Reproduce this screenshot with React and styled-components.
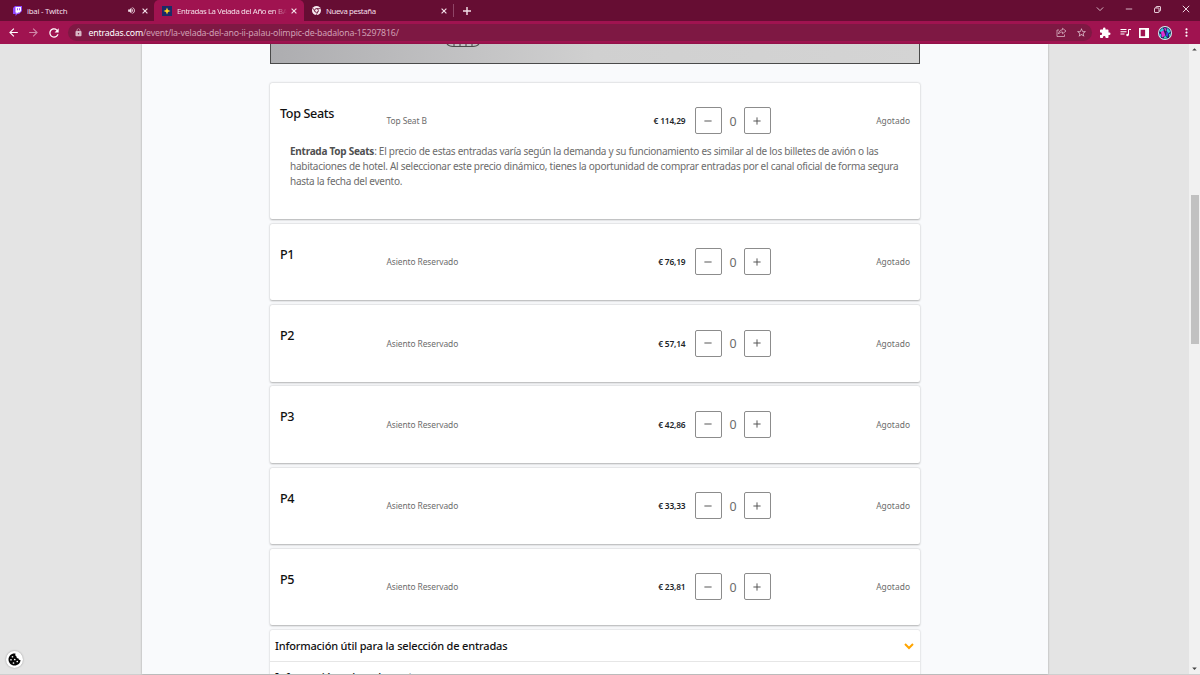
import styled, { createGlobalStyle } from "styled-components";
import {
  MdArrowBack,
  MdArrowForward,
  MdRefresh,
  MdLock,
  MdExtension,
  MdMoreVert,
  MdStarBorder,
  MdVolumeUp,
  MdArrowDropUp,
  MdArrowDropDown,
} from "react-icons/md";

const Colors = {
  frame: "#660d33",
  toolbar: "#a01350",
  omnibox: "#7e1843",
  chromeText: "#f3dfe8",
  page: "#e4e4e4",
  main: "#f9fafc",
  white: "#fff",
  text: "#212529",
  muted: "#6c6c6c",
  orange: "#ffa500",
};

const sections = [
  {
    name: "Top Seats",
    type: "Top Seat B",
    price: "€ 114,29",
    info: true,
  },
  { name: "P1", type: "Asiento Reservado", price: "€ 76,19" },
  { name: "P2", type: "Asiento Reservado", price: "€ 57,14" },
  { name: "P3", type: "Asiento Reservado", price: "€ 42,86" },
  { name: "P4", type: "Asiento Reservado", price: "€ 33,33" },
  { name: "P5", type: "Asiento Reservado", price: "€ 23,81" },
];

const GlobalStyle = createGlobalStyle`
  * {
    box-sizing: border-box;
  }

  body {
    margin: 0;
    overflow: hidden;
    font-family: "Segoe UI", "Noto Sans", "Open Sans", sans-serif;
  }

  svg {
    display: block;
    flex: none;
  }
`;

const Window = styled.div`
  display: flex;
  flex-direction: column;
  width: 1200px;
  height: 675px;
  overflow: hidden;
`;

const TabStrip = styled.div`
  display: flex;
  height: 21px;
  flex: none;
  background: ${Colors.frame};
  color: ${Colors.chromeText};
`;

const Tab = styled.div`
  display: flex;
  align-items: center;
  width: ${(props) => props.$width}px;
  padding: 0 ${(props) => props.$right}px 0 ${(props) => props.$left}px;
  background: ${(props) => (props.$active ? Colors.toolbar : "transparent")};
  border-radius: 5px 5px 0 0;
`;

const TabTitle = styled.span`
  flex: 1;
  margin-left: 5px;
  overflow: hidden;
  white-space: nowrap;
  font-size: 7.8px;
  line-height: 12px;
  letter-spacing: ${(props) => props.$spacing || -0.25}px;
  mask-image: ${(props) =>
    props.$fade ? "linear-gradient(90deg, #000 88%, transparent)" : "none"};
`;

const TabClose = styled.span`
  display: flex;
  margin-left: ${(props) => props.$gap || 7}px;
`;

const Divider = styled.span`
  width: 1px;
  height: 13px;
  margin: 4px 9px 0 0;
  background: #8f4567;
`;

const NewTab = styled.span`
  display: flex;
  align-items: center;
`;

const WindowControls = styled.div`
  display: flex;
  align-items: center;
  gap: 21px;
  margin-left: auto;
  padding: 0 10px 3px 0;
`;

const Toolbar = styled.div`
  display: flex;
  align-items: center;
  flex: none;
  height: 23px;
  padding: 0 7px;
  background: ${Colors.toolbar};
  color: ${Colors.white};
`;

const NavButtons = styled.div`
  display: flex;
  align-items: center;
  gap: 7px;
  width: 61px;
`;

const Faded = styled.span`
  opacity: ${(props) => props.$opacity || 0.5};
`;

const Omnibox = styled.div`
  display: flex;
  align-items: center;
  width: 1024px;
  height: 17px;
  padding: 0 5px 0 6px;
  border-radius: 9px;
  background: ${Colors.omnibox};
`;

const Url = styled.span`
  flex: 1;
  margin-left: 5.5px;
  font-size: 8.8px;
  line-height: 14px;
  letter-spacing: -0.185px;
  color: #cf9fb3;

  b {
    font-weight: 400;
    color: ${Colors.white};
  }
`;

const OmniboxActions = styled.div`
  display: flex;
  align-items: center;
  gap: 9px;
  color: #d7b3c2;
`;

const Extensions = styled.div`
  display: flex;
  align-items: center;
  gap: 8.5px;
  margin-left: auto;
`;

const Viewport = styled.div`
  display: flex;
  flex: 1;
  min-height: 0;
  background: ${Colors.page};
  border-bottom: 1px solid #cfcfcf;
`;

const Side = styled.aside`
  display: flex;
  align-items: flex-end;
  width: 142px;
  padding: 0 0 6px 6px;
`;

const CookieButton = styled.button`
  display: flex;
  align-items: center;
  justify-content: center;
  width: 17px;
  height: 17px;
  padding: 0;
  border: none;
  border-radius: 50%;
  background: ${Colors.white};
  box-shadow: 0 0 2px rgba(0, 0, 0, 0.35);
`;

const Main = styled.main`
  display: flex;
  flex-direction: column;
  align-items: center;
  width: 906px;
  overflow: hidden;
  background: ${Colors.main};
  box-shadow: 0 0 2px rgba(0, 0, 0, 0.3);
`;

const SeatMap = styled.div`
  flex: none;
  width: 650px;
  height: 20px;
  margin-bottom: 18.5px;
  padding-left: 175px;
  border: 1px solid #4a4a4a;
  border-top: none;
  background: linear-gradient(90deg, #adadb0, #d0d0d0 50%, #d4d4d4);
`;

const Card = styled.section`
  flex: none;
  width: 650px;
  height: ${(props) => (props.$tall ? 136.5 : 76.5)}px;
  margin-bottom: 4.75px;
  padding: 24.5px 10px 0;
  border-radius: 2px;
  background: ${Colors.white};
  box-shadow: 0 0.5px 2px rgba(0, 0, 0, 0.3);
`;

const Row = styled.div`
  display: flex;
  align-items: center;
  height: 27px;
`;

const SectionName = styled.h2`
  width: 106.5px;
  margin: 0 0 14px;
  font-size: 12.6px;
  line-height: 16px;
  font-weight: 500;
  letter-spacing: -0.36px;
  color: #111;
`;

const SeatType = styled.span`
  flex: 1;
  font-size: 8.4px;
  letter-spacing: -0.08px;
  color: ${Colors.muted};
`;

const Price = styled.span`
  margin-right: 9.5px;
  font-size: 8.4px;
  font-weight: 600;
  letter-spacing: -0.17px;
  color: ${Colors.text};
`;

const StepButton = styled.button`
  display: flex;
  align-items: center;
  justify-content: center;
  width: 27px;
  height: 27px;
  padding: 0 1px 0 0;
  border: 1px solid #8c8c8c;
  border-radius: 2px;
  background: ${Colors.white};
  color: #505050;
`;

const Amount = styled.span`
  width: 22px;
  padding-top: 1px;
  text-align: center;
  font-size: 12.4px;
  color: ${Colors.muted};
`;

const Status = styled.span`
  width: 139px;
  text-align: right;
  font-size: 8.4px;
  letter-spacing: 0.05px;
  color: ${Colors.muted};
`;

const Info = styled.p`
  margin: 10px 0 0 10px;
  font-size: 10px;
  line-height: 15px;
  white-space: nowrap;
  color: ${Colors.muted};

  b {
    font-weight: 700;
    color: #505050;
  }
`;

const InfoLine = styled.span`
  display: block;
  letter-spacing: -0.268px;
`;

const Accordion = styled.section`
  flex: none;
  width: 650px;
  border-radius: 2px 2px 0 0;
  background: ${Colors.white};
  box-shadow: 0 0 2px rgba(0, 0, 0, 0.25);
`;

const AccordionItem = styled.div`
  display: flex;
  align-items: center;
  justify-content: space-between;
  height: ${(props) => props.$height || 32}px;
  padding: 0 6px 0 5px;
  border-bottom: 1px solid #e6e6e6;
  font-size: 11px;
  line-height: 16px;
  font-weight: 500;
  letter-spacing: -0.17px;
  color: #111;

  svg {
    color: ${Colors.orange};
  }
`;

const Scrollbar = styled.div`
  display: flex;
  flex-direction: column;
  align-items: center;
  justify-content: space-between;
  width: 11px;
  margin-left: auto;
  background: #f1f1f1;
  color: #444;
`;

const ScrollThumb = styled.div`
  width: 8px;
  height: 149px;
  margin: 140px 0 auto;
  background: #c1c1c1;
`;

const Stroke = ({ size = 6, width = 1, d, box = 10 }) => (
  <svg
    width={size}
    height={size}
    viewBox={`0 0 ${box} ${box}`}
    fill="none"
    stroke="currentColor"
    strokeWidth={width}
  >
    <path d={d} />
  </svg>
);

const CloseIcon = () => <Stroke size={6} width={1.9} d="M1 1L9 9M9 1L1 9" />;

const TwitchIcon = () => (
  <svg width="9" height="10" viewBox="0 0 18 20">
    <path d="M4 0L0 4v12h5v4l4-4h3l6-6V0z" fill="#9146ff" />
    <path d="M5 2h11v8l-3 3h-3l-3 3v-3H5z" fill="#fff" />
    <path d="M9 4.500v4M13 4.500v4" stroke="#9146ff" strokeWidth="1.800" />
  </svg>
);

const EntradasIcon = () => (
  <svg width="10" height="10" viewBox="0 0 20 20">
    <path d="M0 0h20v20H0z" fill="#1b2b68" />
    <path d="M10 3l2 5 5 2-5 2-2 5-2-5-5-2 5-2z" fill="#ffd21f" />
  </svg>
);

const ChromeIcon = () => (
  <svg width="9" height="9" viewBox="0 0 18 18">
    <circle cx="9" cy="9" r="9" fill="#f7eaf0" />
    <circle cx="9" cy="9" r="3.800" fill="#f7eaf0" stroke={Colors.frame} strokeWidth="1.700" />
    <path
      d="M9 5.200h8M5.700 11L1.800 4.300M12.300 11l-4 6.900"
      stroke={Colors.frame}
      strokeWidth="1.500"
    />
  </svg>
);

const ShareIcon = () => (
  <svg
    width="11"
    height="11"
    viewBox="0 0 22 22"
    fill="none"
    stroke="currentColor"
    strokeWidth="1.600"
  >
    <path d="M6 6H2v13h15v-4" />
    <path d="M13 2.500l7 5.500-7 5.500v-3.500c-4 0-6 1-8 4 .5-5 3-8 8-8.500z" />
  </svg>
);

const RestoreIcon = () => (
  <svg
    width="7"
    height="7"
    viewBox="0 0 14 14"
    fill="none"
    stroke="currentColor"
    strokeWidth="1.800"
  >
    <rect x="1" y="4" width="9" height="9" rx="1" />
    <path d="M4 4V2q0-1 1-1h7q1 0 1 1v7q0 1-1 1h-2" />
  </svg>
);

const MediaIcon = () => (
  <svg width="11" height="11" viewBox="0 0 22 22" fill="none" stroke="#fff" strokeWidth="2">
    <path d="M1 5h12M1 9.500h12M1 14h8M17 16V5h5" />
    <circle cx="15" cy="16" r="2.500" fill="#fff" stroke="none" />
  </svg>
);

const PanelIcon = () => (
  <svg width="10" height="10" viewBox="0 0 18 18">
    <path d="M1.500 1.500h15v15h-15z" fill="none" stroke="#fff" strokeWidth="3" />
    <path d="M11 1h6v16h-6z" fill="#fff" />
  </svg>
);

const Avatar = () => (
  <svg width="14" height="14" viewBox="0 0 28 28">
    <circle cx="14" cy="14" r="14" fill="#d4f0f2" />
    <circle cx="14" cy="14" r="12" fill="#24205c" />
    <path d="M3 10l6-6 3 4-5 5zM19 4l6 7-4 4-4-6zM2 15l4 1 1 6-3-1z" fill="#35c5dc" />
    <path d="M6 12l5-3 4 10-7 4zM12 4l5 1-2 6z" fill="#e02fd0" />
    <path d="M17 11l4 3-2 8-3-2z" fill="#3047e8" />
    <path d="M11 25l3-6 5 6zM22 16l4-1-3 7z" fill="#36e0b8" />
  </svg>
);

const CookieIcon = () => (
  <svg width="13" height="13" viewBox="0 0 26 26">
    <path
      d="M13 1C6 1 1 6.500 1 13s5 12 12 12 12-5 12-11c-2 0-4-1-4-3-3 0-4-2-4-4-2-1-3-3-2-6z"
      fill="#050505"
    />
    <g fill="#fff">
      <circle cx="9" cy="7.500" r="1.700" />
      <circle cx="6" cy="13.500" r="1.700" />
      <circle cx="13.500" cy="13" r="1.700" />
      <circle cx="11" cy="20" r="1.700" />
      <circle cx="18.500" cy="17" r="1.700" />
    </g>
  </svg>
);

const MapDetail = () => (
  <svg width="34" height="4" viewBox="0 0 34 4" fill="none" stroke="#4a4a4a" strokeWidth="1.100">
    <path d="M1 0q2 2.500 6 2.500h20q4 0 6-2.500M8 0v2M14 0v2M20 0v2M26 0v2" />
  </svg>
);

const Ticket = ({ section }) => (
  <Card $tall={section.info}>
    <Row>
      <SectionName>{section.name}</SectionName>
      <SeatType>{section.type}</SeatType>
      <Price>{section.price}</Price>
      <StepButton>
        <Stroke size={8} width={1.2} d="M0.500 5H9.500" />
      </StepButton>
      <Amount>0</Amount>
      <StepButton>
        <Stroke size={8} width={1.2} d="M0.500 5H9.500M5 0.500V9.500" />
      </StepButton>
      <Status>Agotado</Status>
    </Row>
    {section.info && (
      <Info>
        <InfoLine>
          <b>Entrada Top Seats</b>: El precio de estas entradas varía según la demanda y su
          funcionamiento es similar al de los billetes de avión o las
        </InfoLine>
        <InfoLine>
          habitaciones de hotel. Al seleccionar este precio dinámico, tienes la oportunidad de
          comprar entradas por el canal oficial de forma segura
        </InfoLine>
        <InfoLine>hasta la fecha del evento.</InfoLine>
      </Info>
    )}
  </Card>
);

export default function App() {
  return (
    <Window>
      <GlobalStyle />
      <TabStrip>
        <Tab $width={154} $left={13} $right={6}>
          <TwitchIcon />
          <TabTitle>ibai - Twitch</TabTitle>
          <MdVolumeUp size={9} />
          <TabClose $gap={6}>
            <CloseIcon />
          </TabClose>
        </Tab>
        <Tab $active $width={150} $left={8} $right={7}>
          <EntradasIcon />
          <TabTitle $fade $spacing={-0.38}>
            Entradas La Velada del Año en BA
          </TabTitle>
          <TabClose $gap={4}>
            <CloseIcon />
          </TabClose>
        </Tab>
        <Tab $width={149} $left={8} $right={6}>
          <ChromeIcon />
          <TabTitle $spacing={-0.38}>Nueva pestaña</TabTitle>
          <TabClose>
            <CloseIcon />
          </TabClose>
        </Tab>
        <Divider />
        <NewTab>
          <Stroke size={8} width={1.8} d="M0 5H10M5 0V10" />
        </NewTab>
        <WindowControls>
          <Stroke size={8} d="M1 3L5 7L9 3" />
          <Stroke size={8} d="M1 5H9" />
          <RestoreIcon />
          <Stroke size={8} width={1.2} d="M1 1L9 9M9 1L1 9" />
        </WindowControls>
      </TabStrip>
      <Toolbar>
        <NavButtons>
          <MdArrowBack size={13} />
          <Faded>
            <MdArrowForward size={13} />
          </Faded>
          <MdRefresh size={14} />
        </NavButtons>
        <Omnibox>
          <Faded $opacity={0.7}>
            <MdLock size={9} />
          </Faded>
          <Url>
            <b>entradas.com</b>/event/la-velada-del-ano-ii-palau-olimpic-de-badalona-15297816/
          </Url>
          <OmniboxActions>
            <ShareIcon />
            <MdStarBorder size={11} />
          </OmniboxActions>
        </Omnibox>
        <Extensions>
          <MdExtension size={12} />
          <MediaIcon />
          <PanelIcon />
          <Avatar />
          <MdMoreVert size={13} />
        </Extensions>
      </Toolbar>
      <Viewport>
        <Side>
          <CookieButton>
            <CookieIcon />
          </CookieButton>
        </Side>
        <Main>
          <SeatMap>
            <MapDetail />
          </SeatMap>
          {sections.map((section) => (
            <Ticket key={section.name} section={section} />
          ))}
          <Accordion>
            <AccordionItem>
              Información útil para la selección de entradas
              <Stroke size={10} width={2} d="M1 3L5 7L9 3" />
            </AccordionItem>
            <AccordionItem $height={30}>Información sobre el evento</AccordionItem>
          </Accordion>
        </Main>
        <Scrollbar>
          <MdArrowDropUp size={11} />
          <ScrollThumb />
          <MdArrowDropDown size={11} />
        </Scrollbar>
      </Viewport>
    </Window>
  );
}
